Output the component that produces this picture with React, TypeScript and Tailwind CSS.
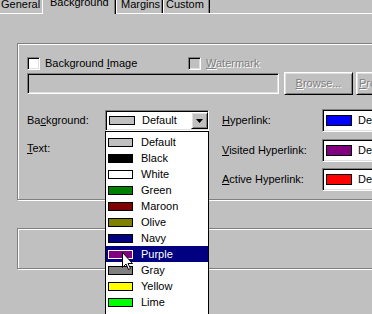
import React from 'react';

const sunken =
  'border border-t-[#808080] border-l-[#808080] border-b-white border-r-white shadow-[inset_1px_1px_0_#000,inset_-1px_-1px_0_#dfdfdf]';
const raised =
  'border border-t-white border-l-white border-b-black border-r-black shadow-[inset_1px_1px_0_#dfdfdf,inset_-1px_-1px_0_#808080]';
const disabledText = 'text-[#808080] [text-shadow:1px_1px_0_#fff]';

const colors = [
  { name: 'Default', hex: '#c0c0c0' },
  { name: 'Black', hex: '#000000' },
  { name: 'White', hex: '#ffffff' },
  { name: 'Green', hex: '#008000' },
  { name: 'Maroon', hex: '#800000' },
  { name: 'Olive', hex: '#808000' },
  { name: 'Navy', hex: '#000080' },
  { name: 'Purple', hex: '#800080' },
  { name: 'Gray', hex: '#808080' },
  { name: 'Yellow', hex: '#ffff00' },
  { name: 'Lime', hex: '#00ff00' },
  { name: 'Teal', hex: '#008080' },
  { name: 'Silver', hex: '#c0c0c0' },
];

function Mn({ children }: { children: React.ReactNode }) {
  return <span className="underline underline-offset-[1px]">{children}</span>;
}

function ColorCombo({ color, label }: { color: string; label: React.ReactNode }) {
  return (
    <div className={`${sunken} shrink-0 w-[90px] h-[23px] bg-white flex items-center`}>
      <div className="ml-[3px] w-[26px] h-[11px] border border-black shrink-0" style={{ background: color }} />
      <span className="ml-[6px] whitespace-nowrap">Default</span>
      {label}
    </div>
  );
}

export default function App() {
  return (
    <div className="relative w-[372px] h-[314px] overflow-hidden bg-[#c0c0c0] text-black text-[11px] leading-[13px] font-['Liberation_Sans',Arial,sans-serif]">
      {/* Tabs */}
      <div className="flex h-[14px] border-b border-white">
        <div className="w-[42px] h-[13px] pl-[1px] shrink-0">
          <div className="-mt-[2px]">General</div>
        </div>
        <div className="relative z-10 w-[74px] h-[14px] shrink-0 bg-[#c0c0c0] border-l border-l-white border-r border-r-black shadow-[inset_-1px_0_0_#808080] pl-[7px]">
          <div className="-mt-[4px]">Background</div>
        </div>
        <div className="w-[47px] h-[13px] shrink-0 border-l border-l-white border-r border-r-black shadow-[inset_-1px_0_0_#808080] pl-[4px]">
          <div className="-mt-[2px]">Margins</div>
        </div>
        <div className="w-[47px] h-[13px] shrink-0 border-l border-l-white border-r border-r-black shadow-[inset_-1px_0_0_#808080] pl-[2px]">
          <div className="-mt-[2px]">Custom</div>
        </div>
      </div>

      {/* Colors group */}
      <div className="ml-[17px] mt-[29px] w-[400px] h-[157px] border border-[#808080] shadow-[inset_1px_1px_0_#fff,1px_1px_0_#fff] pl-[9px] pt-[13px]">
        <div className="flex items-center h-[13px]">
          <div className="w-[161px] shrink-0 flex items-center">
            <div className={`${sunken} w-[13px] h-[13px] bg-white shrink-0`} />
            <span className="ml-[5px] whitespace-nowrap">
              Background <Mn>I</Mn>mage
            </span>
          </div>
          <div className="flex items-center">
            <div className={`${sunken} w-[13px] h-[13px] bg-[#c0c0c0] shrink-0`} />
            <span className={`ml-[5px] whitespace-nowrap ${disabledText}`}>
              <Mn>W</Mn>atermark
            </span>
          </div>
        </div>

        <div className="flex items-start h-[23px] mt-[2px]">
          <div className={`${sunken} mt-[1px] w-[252px] h-[21px] bg-[#c0c0c0] shrink-0`} />
          <div className={`${raised} ml-[5px] w-[69px] h-[23px] shrink-0 flex items-center justify-center ${disabledText}`}>
            <span>
              <Mn>B</Mn>rowse...
            </span>
          </div>
          <div className={`${raised} ml-[3px] w-[80px] h-[23px] shrink-0 flex items-center pl-[2px] ${disabledText}`}>
            <span>
              <Mn>P</Mn>roperties...
            </span>
          </div>
        </div>

        <div className="flex mt-[14px]">
          <div className="w-[195px] shrink-0">
            <div className="flex items-center h-[23px]">
              <span className="w-[78px] shrink-0">
                Ba<Mn>c</Mn>kground:
              </span>
              <div className={`${sunken} w-[104px] h-[21px] bg-white flex items-center shrink-0`}>
                <div className="ml-[3px] w-[26px] h-[9px] border border-black bg-[#c0c0c0] shrink-0" />
                <span className="ml-[7px]">Default</span>
                <div className={`${raised} ml-auto w-[17px] h-[17px] bg-[#c0c0c0] flex items-center justify-center shrink-0`}>
                  <svg width="7" height="4" viewBox="0 0 7 4">
                    <polygon points="0,0 7,0 3.5,4" fill="#000" />
                  </svg>
                </div>
              </div>
            </div>
            <div className="flex items-center h-[23px] mt-[5px]">
              <span>
                <Mn>T</Mn>ext:
              </span>
            </div>
          </div>

          <div className="flex flex-col">
            <div className="flex items-center h-[23px]">
              <span className="w-[100px] shrink-0">
                <Mn>H</Mn>yperlink:
              </span>
              <ColorCombo color="#0000ff" label={null} />
            </div>
            <div className="flex items-center h-[23px] mt-[7px]">
              <span className="w-[100px] shrink-0 whitespace-nowrap">
                <Mn>V</Mn>isited Hyperlink:
              </span>
              <ColorCombo color="#800080" label={null} />
            </div>
            <div className="flex items-center h-[23px] mt-[6px]">
              <span className="w-[100px] shrink-0 whitespace-nowrap">
                <Mn>A</Mn>ctive Hyperlink:
              </span>
              <ColorCombo color="#ff0000" label={null} />
            </div>
          </div>
        </div>
      </div>

      {/* Second group */}
      <div className="ml-[17px] mt-[28px] w-[400px] h-[41px] border border-[#808080] shadow-[inset_1px_1px_0_#fff,1px_1px_0_#fff]" />

      {/* Open dropdown list */}
      <div className="absolute left-[105px] top-[131px] w-[104px] h-[220px] bg-white border border-black pt-[2px] z-20">
        {colors.map((c) => {
          const sel = c.name === 'Purple';
          return (
            <div
              key={c.name}
              className={`flex items-center h-[16px] ${sel ? 'bg-[#000080] text-white' : ''}`}
            >
              <div
                className={`ml-[2px] w-[25px] h-[9px] border shrink-0 ${sel ? 'border-white' : 'border-black'}`}
                style={{ background: c.hex }}
              />
              <span className="ml-[8px]">{c.name}</span>
            </div>
          );
        })}
      </div>

      {/* Mouse pointer */}
      <svg className="absolute left-[122px] top-[252px] z-30" width="12" height="19" viewBox="0 0 12 19">
        <path d="M0.5,0.5 L0.5,15.5 L4,12 L6.5,17.5 L8.5,16.5 L6,11.5 L10.5,11.5 Z" fill="#fff" stroke="#000" strokeWidth="1" />
      </svg>
    </div>
  );
}
